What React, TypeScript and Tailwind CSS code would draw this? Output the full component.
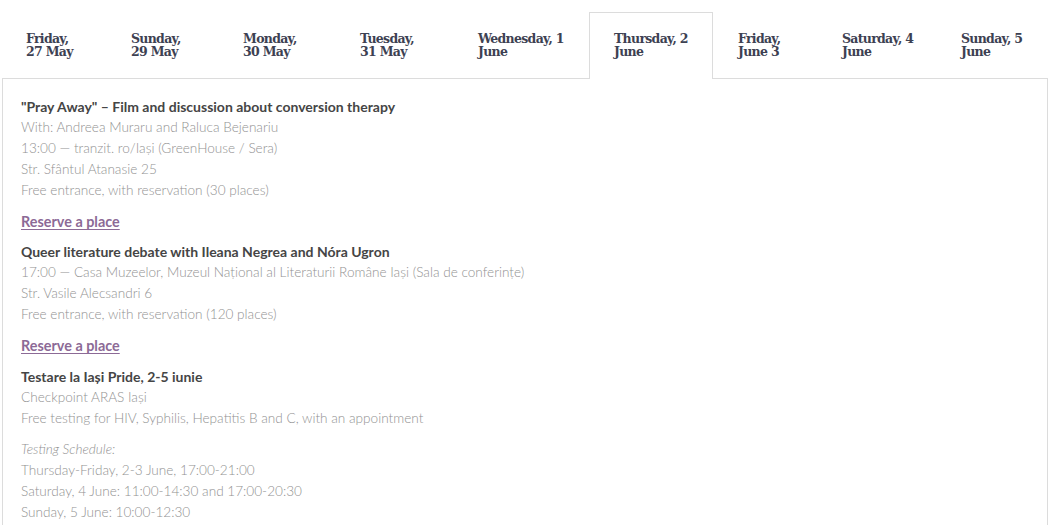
import React from "react";

const tabs = [
  { l1: "Friday,", l2: "27 May", w: "w-[105px]" },
  { l1: "Sunday,", l2: "29 May", w: "w-[112px]" },
  { l1: "Monday,", l2: "30 May", w: "w-[117px]" },
  { l1: "Tuesday,", l2: "31 May", w: "w-[118px]" },
  { l1: "Wednesday, 1", l2: "June", w: "w-[136px]" },
  { l1: "Thursday, 2", l2: "June", w: "w-[124px]", active: true },
  { l1: "Friday,", l2: "June 3", w: "w-[104px]" },
  { l1: "Saturday, 4", l2: "June", w: "w-[119px]" },
  { l1: "Sunday, 5", l2: "June", w: "w-[110px]" },
];

function Title({ children }: { children: React.ReactNode }) {
  return <div className="font-bold text-[14px] leading-[21px] text-[#454545]">{children}</div>;
}

function Line({ children }: { children: React.ReactNode }) {
  return <div className="leading-[21px]">{children}</div>;
}

function Reserve({ mb }: { mb: string }) {
  return (
    <div className={`text-[14.4px] leading-[21px] ${mb}`}>
      <a className="font-bold text-[#8c6a96] underline underline-offset-2" href="#">
        Reserve a place
      </a>
    </div>
  );
}

export default function App() {
  return (
    <div className="w-[1050px] h-[525px] overflow-hidden bg-white pt-[12px] pl-[1px] pr-[2px]">
      <div className="flex">
        {tabs.map((t, i) => (
          <div
            key={i}
            className={
              t.active
                ? `${t.w} shrink-0 border border-b-0 border-[#dcdcdc] bg-white mb-[-1px] relative z-10 pl-[24px] pt-[19px] pb-[20px] text-[12.5px] leading-[13px] font-bold text-[#3d4152]`
                : `${t.w} shrink-0 border border-transparent border-b-0 pl-[24px] pt-[19px] pb-[20px] text-[12.5px] leading-[13px] font-bold text-[#3d4152]`
            }
            style={{ fontFamily: '"DejaVu Serif", "Liberation Serif", serif' }}
          >
            <div className="tracking-[-0.7px] whitespace-nowrap">{t.l1}</div>
            <div className="tracking-[-0.7px] whitespace-nowrap">{t.l2}</div>
          </div>
        ))}
      </div>
      <div
        className="ml-[1px] border border-[#dcdcdc] h-[500px] pl-[18px] pt-[17px] text-[13.6px] leading-[21px] text-[#929292] font-light"
        style={{ fontFamily: 'Lato, "Open Sans", sans-serif' }}
      >
        <div className="mb-[10px]">
          <Title>"Pray Away" – Film and discussion about conversion therapy</Title>
          <Line>With: Andreea Muraru and Raluca Bejenariu</Line>
          <Line>13:00 — tranzit. ro/Iași (GreenHouse / Sera)</Line>
          <Line>Str. Sfântul Atanasie 25</Line>
          <Line>Free entrance, with reservation (30 places)</Line>
        </div>
        <Reserve mb="mb-[9px]" />
        <div className="mb-[10px]">
          <Title>Queer literature debate with Ileana Negrea and Nóra Ugron</Title>
          <Line>17:00 — Casa Muzeelor, Muzeul Național al Literaturii Române Iași (Sala de conferințe)</Line>
          <Line>Str. Vasile Alecsandri 6</Line>
          <Line>Free entrance, with reservation (120 places)</Line>
        </div>
        <Reserve mb="mb-[10px]" />
        <div className="mb-[10px]">
          <Title>Testare la Iași Pride, 2-5 iunie</Title>
          <Line>Checkpoint ARAS Iași</Line>
          <Line>Free testing for HIV, Syphilis, Hepatitis B and C, with an appointment</Line>
        </div>
        <div>
          <Line>
            <em>Testing Schedule:</em>
          </Line>
          <Line>Thursday-Friday, 2-3 June, 17:00-21:00</Line>
          <Line>Saturday, 4 June: 11:00-14:30 and 17:00-20:30</Line>
          <Line>Sunday, 5 June: 10:00-12:30</Line>
        </div>
      </div>
    </div>
  );
}
